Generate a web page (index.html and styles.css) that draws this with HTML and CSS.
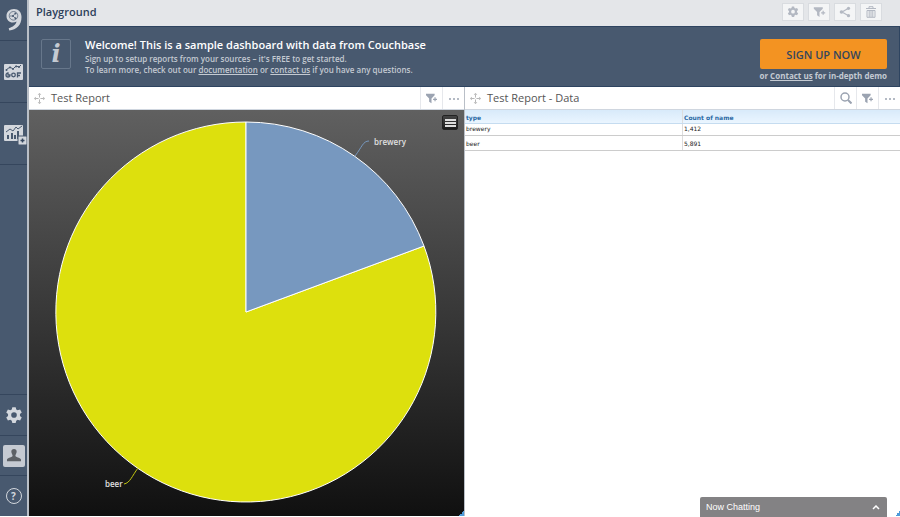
FILE: index.html
```html
<!DOCTYPE html>
<html lang="en">
<head>
  <meta charset="UTF-8" />
  <title>Playground</title>
  <link rel="stylesheet" href="styles.css">
</head>
<body>

  <!-- shared icons -->
  <svg class="sprite" aria-hidden="true">
    <symbol id="gear" viewBox="0 0 16 16">
      <path fill-rule="evenodd" d="M6.500 0.500h3l.5 2.100 1.300.7 2.100-.7 1.500 2.600-1.600 1.500v1.600l1.600 1.500-1.500 2.600-2.100-.7-1.300.8-.5 2.100h-3L6 12.500l-1.300-.8-2.100.7L1.100 9.800l1.600-1.500V6.700L1.100 5.200l1.500-2.600 2.100.7L6 2.600zM8 5a2.500 2.500 0 1 0 0 5 2.500 2.500 0 0 0 0-5z"/>
    </symbol>
    <symbol id="filter" viewBox="0 0 16 14">
      <path d="M1 1h11v2L8 7v6l-3-2V7L1 3z"/>
      <path d="M12.500 5.500v5M10 8h5" stroke="currentColor" stroke-width="1.500"/>
    </symbol>
    <symbol id="move" viewBox="0 0 12 12">
      <path d="M6 2v3M6 7v3M2 6h3M7 6h3" stroke="currentColor"/>
      <path d="M6 0l2 2H4zM6 12l2-2H4zM0 6l2-2v4zM12 6l-2-2v4z"/>
    </symbol>
    <symbol id="dots" viewBox="0 0 12 12">
      <circle cx="2" cy="7" r="1"/><circle cx="6" cy="7" r="1"/><circle cx="10" cy="7" r="1"/>
    </symbol>
  </svg>

  <div class="app">
    <nav class="sidebar">
      <a href="#" class="logo" aria-label="Home">
        <svg width="16" height="22" viewBox="0 0 16 22">
          <path fill="#d3d7dd" d="M8 0C3.500 0 .500 3 .500 7s2.700 6.500 6.300 6.500c1.500 0 2.700-.4 3.700-1-.6 3.200-3.600 5.500-7.800 6.700l.6 2.300C10.500 20.500 15.500 16.500 15.500 8 15.500 3 12.500 0 8 0z"/>
          <circle cx="7.500" cy="6.800" r="4.300" fill="none" stroke="#48596f" stroke-width=".7"/>
          <path d="M4 7h3l2.500-3M7 7l2.500 2.500" fill="none" stroke="#48596f" stroke-width=".7"/>
          <circle cx="7" cy="7" r="1" fill="#48596f"/><circle cx="9.500" cy="4.500" r="1" fill="#48596f"/><circle cx="9.500" cy="9.300" r="1" fill="#48596f"/>
        </svg>
      </a>
      <a href="#" class="item" aria-label="Dashboards">
        <svg width="20" height="18" viewBox="0 0 20 18">
          <rect y="1" width="19" height="16" rx="1" fill="#d3d7dd"/>
          <path d="M2 7l4-3 3 2 3-3 3 1 2-2" fill="none" stroke="#48596f" stroke-width="1"/>
          <g fill="#48596f"><circle cx="2.500" cy="7" r="1"/><circle cx="6" cy="4.500" r="1"/><circle cx="9" cy="6" r="1"/><circle cx="12" cy="3.500" r="1"/><circle cx="15" cy="4" r="1"/></g>
          <g fill="none" stroke="#48596f" stroke-width="1.300"><path d="M4 10a2 2 0 1 0 2 2H4z"/><circle cx="9.500" cy="12" r="1.800"/><path d="M13.500 14.500V10H17M13.500 12.500h2.500"/></g>
        </svg>
      </a>
      <a href="#" class="item" aria-label="Add report">
        <svg width="26" height="22" viewBox="0 0 26 22">
          <rect x="3" y="2" width="19" height="16" rx="1" fill="#d3d7dd"/>
          <path d="M5 9l4-3 3 2 3-4 2 2 4-3" fill="none" stroke="#48596f"/>
          <path d="M7 16v-4M11 16v-6M14 16v-4M17 16V8" stroke="#48596f" stroke-width="2"/>
          <rect x="17" y="13" width="9" height="9" rx="1" fill="#d3d7dd" stroke="#48596f"/>
          <path d="M21.500 15.500v4M19.500 17.500h4" stroke="#34465e" stroke-width="1.500"/>
        </svg>
      </a>
      <a href="#" class="small first" aria-label="Settings">
        <svg width="18" height="18" viewBox="0 0 16 15" fill="#d3d7dd"><use href="#gear" width="16" height="16"/></svg>
      </a>
      <a href="#" class="small" aria-label="Profile">
        <svg width="24" height="24" viewBox="0 0 24 24">
          <rect x="1" y="1" width="22" height="22" rx="2" fill="#c5cad2"/>
          <path fill="#5d6166" d="M12 5c-2 0-3 1.400-2.600 3.200.3 1.500 1.200 2.300 1.200 3.600 0 1.700-4.600 1.400-5.600 3.700v1.700h14v-1.700c-1-2.300-5.600-2-5.600-3.700 0-1.300.9-2.100 1.200-3.600C15 6.400 14 5 12 5z"/>
        </svg>
      </a>
      <a href="#" class="small help" aria-label="Help"><span>?</span></a>
    </nav>

    <div class="main">
      <header class="topbar">
        <h1>Playground</h1>
        <div class="actions">
          <button aria-label="Settings"><svg width="12" height="12"><use href="#gear"/></svg></button>
          <button aria-label="Filter"><svg width="13" height="12"><use href="#filter"/></svg></button>
          <button aria-label="Share">
            <svg width="12" height="12" viewBox="0 0 12 12"><path d="M10 2L3 6l7 4" fill="none" stroke="currentColor" stroke-width="1.200"/><circle cx="9.500" cy="2.300" r="1.600"/><circle cx="2.500" cy="6" r="1.800"/><circle cx="9.500" cy="9.700" r="1.600"/></svg>
          </button>
          <button aria-label="Delete">
            <svg width="12" height="12" viewBox="0 0 12 12"><path d="M4 2V.700h4V2M1 2.500h10M2 4.500h8v6.800H2zM4.200 4.500V11M6 4.500V11M7.800 4.500V11" fill="none" stroke="currentColor"/></svg>
          </button>
        </div>
      </header>

      <section class="banner">
        <div class="info">i</div>
        <div class="welcome">
          <h2>Welcome! This is a sample dashboard with data from Couchbase</h2>
          <p>Sign up to setup reports from your sources – it's FREE to get started.</p>
          <p>To learn more, check out our <a href="#">documentation</a> or <a href="#">contact us</a> if you have any questions.</p>
        </div>
        <div class="signup">
          <button>SIGN UP NOW</button>
          <p>or <a href="#">Contact us</a> for in-depth demo</p>
        </div>
      </section>

      <div class="panels">
        <section class="panel">
          <div class="panel-head">
            <svg class="move" width="11" height="11"><use href="#move"/></svg>
            <h3>Test Report</h3>
            <button aria-label="Filter"><svg width="13" height="11"><use href="#filter"/></svg></button>
            <button aria-label="More"><svg width="12" height="12"><use href="#dots"/></svg></button>
          </div>
          <div class="chart">
            <svg class="pie" viewBox="0 0 435 406">
              <g stroke="#fff" stroke-width="1">
                <path fill="#dde00d" d="M217 202L395 136A190 190 0 1 1 217 12z"/>
                <path fill="#7798bf" d="M217 202V12A190 190 0 0 1 395 136z"/>
              </g>
              <path d="M326 46C333 37 334 31 340 31" fill="none" stroke="#7798bf"/>
              <path d="M109 358C103 366 101 373 95 374" fill="none" stroke="#c3c60f"/>
              <text x="345" y="35">brewery</text>
              <text x="76" y="377">beer</text>
            </svg>
            <button class="chart-menu" aria-label="Chart menu"><i></i><i></i><i></i></button>
            <span class="grip"></span>
          </div>
        </section>

        <section class="panel">
          <div class="panel-head">
            <svg class="move" width="11" height="11"><use href="#move"/></svg>
            <h3>Test Report - Data</h3>
            <button aria-label="Search"><svg width="12" height="12" viewBox="0 0 12 12"><g fill="none" stroke="currentColor"><circle cx="5" cy="5" r="4" stroke-width="1.500"/><path d="M8 8l3.500 3.500" stroke-width="2"/></g></svg></button>
            <button aria-label="Filter"><svg width="13" height="11"><use href="#filter"/></svg></button>
            <button aria-label="More"><svg width="12" height="12"><use href="#dots"/></svg></button>
          </div>
          <div class="data">
            <table>
              <thead><tr><th>type</th><th>Count of name</th></tr></thead>
              <tbody>
                <tr><td>brewery</td><td>1,412</td></tr>
                <tr><td>beer</td><td>5,891</td></tr>
              </tbody>
            </table>
            <span class="grip"></span>
          </div>
        </section>
      </div>
    </div>
  </div>

  <button class="chat">
    <span>Now Chatting</span>
    <svg width="8" height="5" viewBox="0 0 8 5"><path d="M1 4l3-3 3 3" fill="none" stroke="#fff" stroke-width="1.500"/></svg>
  </button>

</body>
</html>
```
FILE: styles.css
```css
* {
  box-sizing: border-box;
}
body {
  font-family: "Open Sans", sans-serif;
  background: #fff;
  margin: 0;
}
h1, h2, h3, p {
  margin: 0;
}
button {
  font-family: inherit;
  padding: 0;
  border: 0;
  cursor: pointer;
}
svg {
  display: block;
}
.sprite {
  position: absolute;
  width: 0;
  height: 0;
}
.app {
  display: flex;
  height: 100vh;
  padding-bottom: 1px;
}

/* sidebar */
.sidebar {
  display: flex;
  flex-direction: column;
  width: 29px;
  flex-shrink: 0;
  background: #48596f;
  border-right: 2px solid #b9bfc7;
}
.sidebar a {
  display: flex;
  align-items: center;
  justify-content: center;
  border-bottom: 1px solid #35465d;
  color: #d3d7dd;
  text-decoration: none;
}
.sidebar svg {
  flex-shrink: 0;
}
.sidebar .logo {
  height: 41px;
}
.sidebar .item {
  height: 62px;
}
.sidebar .small {
  height: 40px;
}
.sidebar .first {
  height: 42px;
  margin-top: auto;
  border-top: 1px solid #35465d;
}
.sidebar .help {
  border-bottom: 0;
}
.help span {
  width: 16px;
  height: 16px;
  border: 1px solid #d3d7dd;
  border-radius: 50%;
  font-size: 10px;
  font-weight: bold;
  line-height: 14px;
  text-align: center;
}

/* top bar */
.main {
  display: flex;
  flex-direction: column;
  flex: 1;
  min-width: 0;
}
.topbar {
  display: flex;
  align-items: center;
  justify-content: space-between;
  height: 26px;
  padding: 0 18px 2px 7px;
  background: #e4e6e9;
}
.topbar h1 {
  font-size: 11px;
  font-weight: 600;
  line-height: 16px;
  color: #2c405a;
}
.actions {
  display: flex;
  gap: 4px;
}
.actions button {
  display: flex;
  align-items: center;
  justify-content: center;
  width: 22px;
  height: 18px;
  background: #f4f5f6;
  border: 1px solid #d9dce0;
  color: #b3b8c2;
  fill: currentColor;
}

/* banner */
.banner {
  display: flex;
  height: 61px;
  padding: 12px 12px 0 12px;
  background: #48596f;
  border: 1px solid #2e4460;
  border-left: 0;
  color: #c4cad2;
  font-size: 8px;
  font-weight: 600;
  line-height: 11px;
}
.banner a {
  color: inherit;
}
.info {
  width: 30px;
  height: 30px;
  margin-right: 14px;
  border: 1px solid #67778b;
  border-radius: 2px;
  font: italic bold 24px/28px "DejaVu Serif", serif;
  text-align: center;
}
.welcome {
  flex: 1;
}
.welcome h2 {
  margin-bottom: 2px;
  font-size: 11px;
  font-weight: 600;
  line-height: 12px;
  color: #fff;
}
.signup {
  text-align: right;
}
.signup p {
  font-weight: bold;
}
.signup button {
  width: 127px;
  height: 30px;
  margin-bottom: 1px;
  background: #f39322;
  border-radius: 2px;
  color: #34465e;
  font-size: 11px;
  font-weight: 600;
}

/* panels */
.panels {
  display: flex;
  flex: 1;
  gap: 1px;
  min-height: 0;
  background: #b9bfc7;
}
.panel {
  display: flex;
  flex-direction: column;
  flex: 1;
  min-width: 0;
  background: #fff;
}
.panel-head {
  display: flex;
  align-items: center;
  height: 23px;
  border-bottom: 1px solid #cfd6df;
  color: #9ba3b1;
  fill: currentColor;
}
.panel-head .move {
  margin: 0 6px 0 5px;
  color: #b0b0b0;
}
.panel-head h3 {
  flex: 1;
  font-size: 11px;
  font-weight: normal;
  line-height: 16px;
  color: #555;
}
.panel-head button {
  display: flex;
  align-items: center;
  justify-content: center;
  width: 22px;
  height: 100%;
  background: none;
  border-left: 1px solid #e6e8ec;
  color: inherit;
  fill: currentColor;
}
.chart, .data {
  position: relative;
  flex: 1;
  min-height: 0;
}
.chart {
  background: linear-gradient(#606060, #101010);
}
.pie {
  width: 100%;
  height: 100%;
}
.pie text {
  font-size: 8px;
  font-weight: 600;
  fill: #e0e0e0;
}
.chart-menu {
  position: absolute;
  top: 5px;
  right: 6px;
  display: flex;
  flex-direction: column;
  align-items: center;
  justify-content: center;
  gap: 1px;
  width: 16px;
  height: 15px;
  background: linear-gradient(#444, #1c1c1c);
  border: 1px solid #222;
  border-radius: 2px;
}
.chart-menu i {
  width: 11px;
  height: 2px;
  background: #ddd;
}
.grip {
  position: absolute;
  right: 0;
  bottom: 0;
  width: 5px;
  height: 5px;
  background: linear-gradient(135deg, transparent 50%, #4f9bd9 50%);
}
table {
  width: 100%;
  border-collapse: collapse;
  table-layout: fixed;
  font-family: "DejaVu Sans", sans-serif;
  font-size: 6px;
  line-height: 8px;
  color: #222;
}
th, td {
  padding: 0 1px;
  text-align: left;
}
th {
  height: 13px;
  padding-top: 3px;
  background: linear-gradient(#d8eafa, #eaf5ff);
  border-bottom: 1px solid #c5dcf0;
  color: #2a69a4;
}
th + th, td + td {
  border-left: 1px solid #ddd;
}
td {
  height: 15px;
  padding-top: 3px;
  border-bottom: 1px solid #ccc;
}
tbody tr:first-child td {
  height: 12px;
  padding: 0 1px;
}

/* chat */
.chat {
  position: fixed;
  right: 13px;
  bottom: 0;
  display: flex;
  align-items: center;
  justify-content: space-between;
  width: 187px;
  height: 20px;
  padding: 0 7px 0 6px;
  background: #838284;
  border-radius: 2px 2px 0 0;
  color: #fff;
  font: 9px/12px "Liberation Sans", sans-serif;
}
```
